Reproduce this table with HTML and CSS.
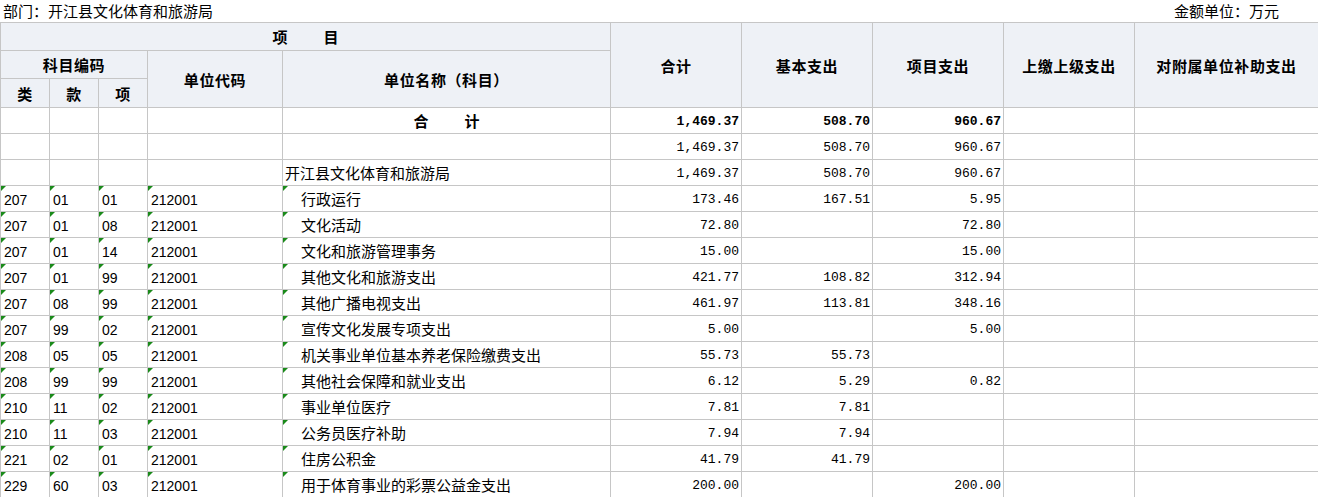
FILE: index.html
```html
<!DOCTYPE html>
<html lang="zh-CN">
<head>
<meta charset="utf-8">
<title>部门支出表</title>
<link rel="stylesheet" href="styles.css">
</head>
<body>
<div class="page">
  <div class="caption">
    <span class="dept">部门：开江县文化体育和旅游局</span>
    <span class="unit">金额单位：万元</span>
  </div>
  <table class="sheet">
    <colgroup>
      <col class="c-code"><col class="c-code"><col class="c-code">
      <col class="c-unit"><col class="c-name">
      <col class="c-num"><col class="c-num"><col class="c-num"><col class="c-num">
      <col class="c-last">
    </colgroup>
    <thead>
      <tr class="h1">
        <th colspan="5" class="spaced">项　　目</th>
        <th rowspan="3">合计</th>
        <th rowspan="3">基本支出</th>
        <th rowspan="3">项目支出</th>
        <th rowspan="3">上缴上级支出</th>
        <th rowspan="3">对附属单位补助支出</th>
      </tr>
      <tr class="h2">
        <th colspan="3">科目编码</th>
        <th rowspan="2">单位代码</th>
        <th rowspan="2">单位名称（科目）</th>
      </tr>
      <tr class="h3">
        <th>类</th><th>款</th><th>项</th>
      </tr>
    </thead>
    <tbody>
      <tr class="total">
        <td></td><td></td><td></td><td></td>
        <td class="center spaced2">合　　计</td>
        <td class="num">1,469.37</td><td class="num">508.70</td><td class="num">960.67</td><td></td><td></td>
      </tr>
      <tr>
        <td></td><td></td><td></td><td></td><td></td>
        <td class="num">1,469.37</td><td class="num">508.70</td><td class="num">960.67</td><td></td><td></td>
      </tr>
      <tr>
        <td></td><td></td><td></td><td></td>
        <td class="name">开江县文化体育和旅游局</td>
        <td class="num">1,469.37</td><td class="num">508.70</td><td class="num">960.67</td><td></td><td></td>
      </tr>
      <tr>
        <td class="code mark">207</td><td class="code mark">01</td><td class="code mark">01</td><td class="code mark">212001</td>
        <td class="name sub mark">行政运行</td>
        <td class="num">173.46</td><td class="num">167.51</td><td class="num">5.95</td><td></td><td></td>
      </tr>
      <tr>
        <td class="code mark">207</td><td class="code mark">01</td><td class="code mark">08</td><td class="code mark">212001</td>
        <td class="name sub mark">文化活动</td>
        <td class="num">72.80</td><td class="num"></td><td class="num">72.80</td><td></td><td></td>
      </tr>
      <tr>
        <td class="code mark">207</td><td class="code mark">01</td><td class="code mark">14</td><td class="code mark">212001</td>
        <td class="name sub mark">文化和旅游管理事务</td>
        <td class="num">15.00</td><td class="num"></td><td class="num">15.00</td><td></td><td></td>
      </tr>
      <tr>
        <td class="code mark">207</td><td class="code mark">01</td><td class="code mark">99</td><td class="code mark">212001</td>
        <td class="name sub mark">其他文化和旅游支出</td>
        <td class="num">421.77</td><td class="num">108.82</td><td class="num">312.94</td><td></td><td></td>
      </tr>
      <tr>
        <td class="code mark">207</td><td class="code mark">08</td><td class="code mark">99</td><td class="code mark">212001</td>
        <td class="name sub mark">其他广播电视支出</td>
        <td class="num">461.97</td><td class="num">113.81</td><td class="num">348.16</td><td></td><td></td>
      </tr>
      <tr>
        <td class="code mark">207</td><td class="code mark">99</td><td class="code mark">02</td><td class="code mark">212001</td>
        <td class="name sub mark">宣传文化发展专项支出</td>
        <td class="num">5.00</td><td class="num"></td><td class="num">5.00</td><td></td><td></td>
      </tr>
      <tr>
        <td class="code mark">208</td><td class="code mark">05</td><td class="code mark">05</td><td class="code mark">212001</td>
        <td class="name sub mark">机关事业单位基本养老保险缴费支出</td>
        <td class="num">55.73</td><td class="num">55.73</td><td class="num"></td><td></td><td></td>
      </tr>
      <tr>
        <td class="code mark">208</td><td class="code mark">99</td><td class="code mark">99</td><td class="code mark">212001</td>
        <td class="name sub mark">其他社会保障和就业支出</td>
        <td class="num">6.12</td><td class="num">5.29</td><td class="num">0.82</td><td></td><td></td>
      </tr>
      <tr>
        <td class="code mark">210</td><td class="code mark">11</td><td class="code mark">02</td><td class="code mark">212001</td>
        <td class="name sub mark">事业单位医疗</td>
        <td class="num">7.81</td><td class="num">7.81</td><td class="num"></td><td></td><td></td>
      </tr>
      <tr>
        <td class="code mark">210</td><td class="code mark">11</td><td class="code mark">03</td><td class="code mark">212001</td>
        <td class="name sub mark">公务员医疗补助</td>
        <td class="num">7.94</td><td class="num">7.94</td><td class="num"></td><td></td><td></td>
      </tr>
      <tr>
        <td class="code mark">221</td><td class="code mark">02</td><td class="code mark">01</td><td class="code mark">212001</td>
        <td class="name sub mark">住房公积金</td>
        <td class="num">41.79</td><td class="num">41.79</td><td class="num"></td><td></td><td></td>
      </tr>
      <tr>
        <td class="code mark">229</td><td class="code mark">60</td><td class="code mark">03</td><td class="code mark">212001</td>
        <td class="name sub mark">用于体育事业的彩票公益金支出</td>
        <td class="num">200.00</td><td class="num"></td><td class="num">200.00</td><td></td><td></td>
      </tr>
    </tbody>
  </table>
</div>
</body>
</html>
```

FILE: styles.css
```css
html, body {
  margin: 0;
  padding: 0;
  background: #ffffff;
}

body {
  font-family: "Noto Sans CJK SC", "Noto Sans", sans-serif;
  font-size: 15px;
  color: #000000;
}

.page {
  width: 1318px;
}

.caption {
  display: flex;
  justify-content: space-between;
  align-items: center;
  height: 22px;
  padding: 0 39px 0 3px;
  line-height: 22px;
  font-size: 15px;
}

.sheet {
  border-collapse: collapse;
  table-layout: fixed;
  width: 1318px;
}

.c-code { width: 49px; }
.c-unit { width: 135px; }
.c-name { width: 328px; }
.c-num  { width: 131px; }
.c-last { width: 184px; }

.sheet th,
.sheet td {
  border: 1px solid #c6c6c6;
  padding: 0;
  white-space: nowrap;
  overflow: hidden;
}

.sheet th {
  background: #eef1f6;
  font-weight: bold;
  font-size: 15px;
  letter-spacing: 0.6px;
  text-align: center;
  vertical-align: middle;
}

.sheet .h1 th { height: 27px; }
.sheet .h2 th { height: 27px; }
.sheet .h3 th { height: 28px; }

.sheet .spaced {
  letter-spacing: 2px;
  padding-left: 2px;
}

.sheet td {
  height: 24px;
  vertical-align: middle;
  position: relative;
  line-height: 20px;
  padding-top: 1px;
}

.sheet .code {
  font-family: "Liberation Sans", Arial, sans-serif;
  font-size: 14px;
  padding-left: 3px;
  padding-top: 3px;
  height: 22px;
}

.sheet .name {
  padding-left: 2px;
}

.sheet .sub {
  padding-left: 18px;
}

.sheet .center {
  text-align: center;
}

.sheet .spaced2 {
  letter-spacing: 2px;
  padding-left: 2px;
}

.sheet .num {
  font-family: "Liberation Mono", "DejaVu Sans Mono", monospace;
  font-size: 13px;
  text-align: right;
  padding-right: 2px;
  padding-top: 2px;
  height: 23px;
}

.sheet .total td {
  font-weight: bold;
}

.sheet .mark::before {
  content: "";
  position: absolute;
  left: 0;
  top: 0;
  width: 0;
  height: 0;
  border-top: 5px solid #1a8a1a;
  border-right: 5px solid transparent;
}
```
